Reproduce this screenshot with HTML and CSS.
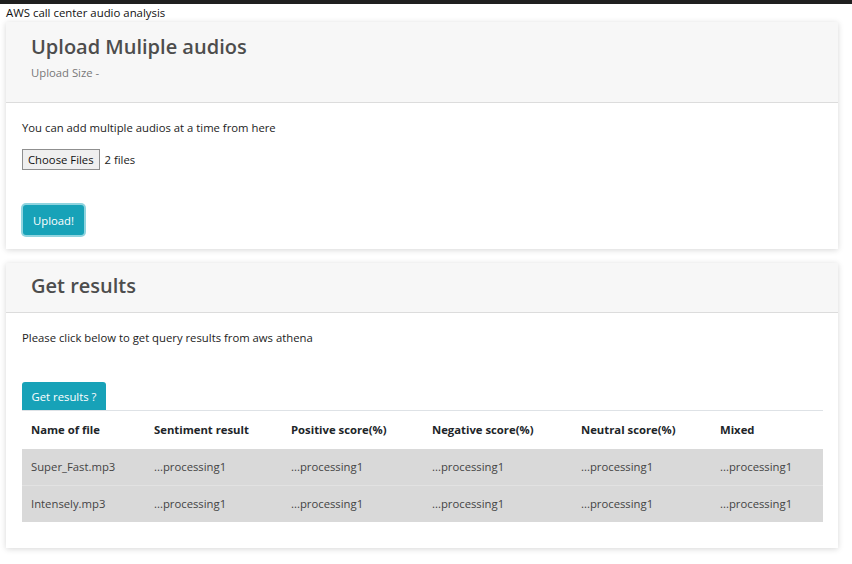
FILE: index.html
```html
<!DOCTYPE html>
<html>
<head>
<meta charset="utf-8">
<link rel="stylesheet" href="styles.css">
</head>
<body>
<div class="topbar"></div>
<div class="apptitle">AWS call center audio analysis</div>
<main class="page">
  <section class="card">
    <header class="card-head">
      <h2 class="card-title">Upload Muliple audios</h2>
      <div class="card-sub">Upload Size -</div>
    </header>
    <div class="card-body upload-body">
      <p class="lead">You can add multiple audios at a time from here</p>
      <div class="file-row">
        <button class="file-btn" type="button">Choose Files</button>
        <span class="file-count">2 files</span>
      </div>
      <button class="btn btn-focus" type="button">Upload!</button>
    </div>
  </section>

  <section class="card">
    <header class="card-head head-short">
      <h2 class="card-title">Get results</h2>
    </header>
    <div class="card-body results-body">
      <p class="lead">Please click below to get query results from aws athena</p>
      <button class="btn btn-tab" type="button">Get results ?</button>
      <table class="results">
        <thead>
          <tr>
            <th class="c1">Name of file</th>
            <th class="c2">Sentiment result</th>
            <th class="c3">Positive score(%)</th>
            <th class="c4">Negative score(%)</th>
            <th class="c5">Neutral score(%)</th>
            <th class="c6">Mixed</th>
          </tr>
        </thead>
        <tbody>
          <tr>
            <td>Super_Fast.mp3</td>
            <td>...processing1</td>
            <td>...processing1</td>
            <td>...processing1</td>
            <td>...processing1</td>
            <td>...processing1</td>
          </tr>
          <tr>
            <td>Intensely.mp3</td>
            <td>...processing1</td>
            <td>...processing1</td>
            <td>...processing1</td>
            <td>...processing1</td>
            <td>...processing1</td>
          </tr>
        </tbody>
      </table>
    </div>
  </section>
</main>
</body>
</html>
```

FILE: styles.css
```css
* { box-sizing: border-box; }
html, body { margin: 0; padding: 0; background: #fff; }
body {
  font-family: "Open Sans", "Noto Sans", sans-serif;
  font-size: 11.3px;
  color: #212529;
  width: 852px;
  height: 564px;
  overflow: hidden;
}
.topbar { height: 4px; background: #1f1f1f; }
.apptitle {
  padding-left: 6px;
  height: 18px;
  line-height: 18px;
  font-size: 11.4px;
  color: #111;
}
.page {
  padding-left: 6px;
  display: flex;
  flex-direction: column;
  gap: 14px;
}
.card {
  width: 832px;
  background: #fff;
  box-shadow: 0 1px 6px rgba(0,0,0,0.16);
}
.card-head {
  background: #f7f7f7;
  border-bottom: 1px solid #dcdcdc;
  padding: 11px 25px 0;
  height: 81px;
}
.head-short { height: 50px; padding-top: 9px; }
.card-title {
  margin: 0;
  font-size: 20px;
  line-height: 28px;
  font-weight: 600;
  color: #4d4d4d;
}
.card-sub {
  margin-top: 4px;
  font-size: 11.3px;
  color: #777;
}
.card-body { padding: 16px 16px 0; }
.upload-body { padding-bottom: 14px; }
.upload-body .file-row { margin-top: 13px; }
.results-body { padding-top: 16px; padding-bottom: 26px; }
.lead { margin: 0; line-height: 17px; color: #222; }
.file-row {
  display: flex;
  align-items: center;
  gap: 5px;
  margin-top: 12px;
  margin-bottom: 35px;
}
.file-btn {
  font-family: inherit;
  font-size: 11.3px;
  color: #111;
  height: 21px;
  padding: 0 5px;
  background: #efefef;
  border: 1px solid #8f8f8f;
  border-radius: 0;
}
.file-count { color: #222; }
.btn {
  font-family: inherit;
  font-size: 11.3px;
  color: #fff;
  background: #17a2b8;
  border: 0;
  border-radius: 3px;
  cursor: pointer;
}
.btn-focus {
  height: 30px;
  width: 61px;
  margin-left: 1px;
  box-shadow: 0 0 0 2px rgba(106, 198, 212, 0.75);
}
.btn-tab {
  display: block;
  margin-top: 36px;
  height: 28px;
  width: 84px;
  border-radius: 3px 3px 0 0;
}
.results {
  width: 801px;
  border-collapse: collapse;
  table-layout: fixed;
  border-top: 1px solid #dee2e6;
}
.results th, .results td {
  text-align: left;
  padding: 0 9px;
  white-space: nowrap;
}
.results th { height: 38px; font-weight: 700; color: #212529; }
.results td { background: #d9d9d9; color: #444; height: 37px; }
.results tbody tr + tr td { border-top: 1px solid #e2e2e2; height: 36px; }
.c1 { width: 123px; }
.c2 { width: 137px; }
.c3 { width: 141px; }
.c4 { width: 149px; }
.c5 { width: 139px; }
.c6 { width: 112px; }
```
